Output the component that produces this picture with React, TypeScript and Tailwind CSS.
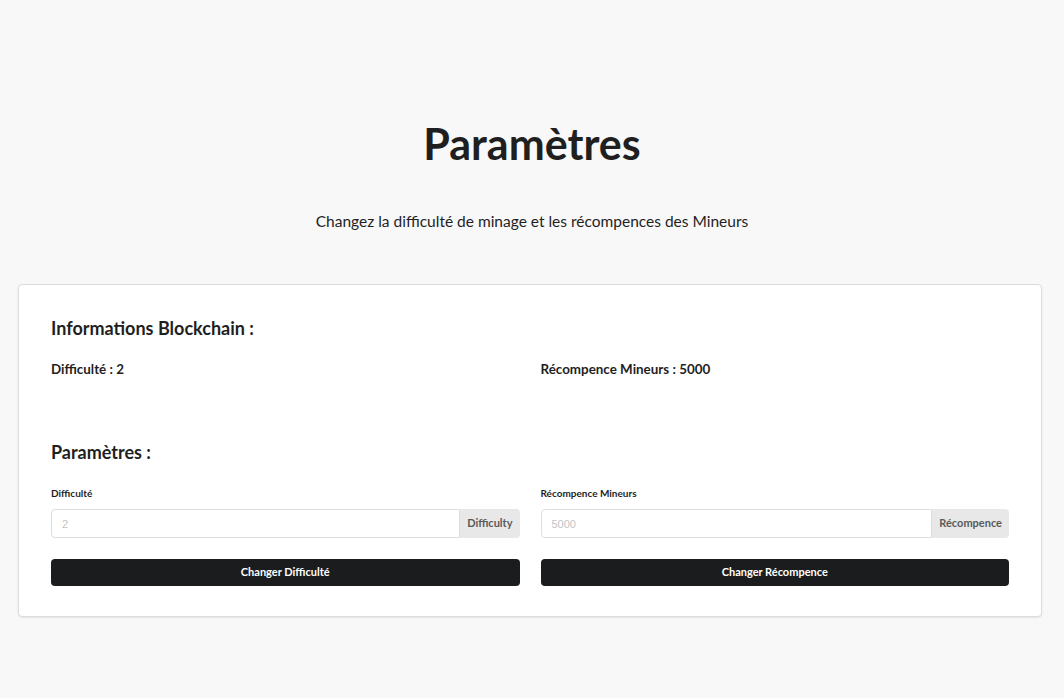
import React from 'react';

function Field({ label, value, addon, action }: { label: string; value: string; addon: string; action: string }) {
  return (
    <div className="flex flex-col">
      <label className="text-[10px] font-bold text-[#1f1f1f] leading-none mb-[11px]">{label}</label>
      <div className="flex h-[29px]">
        <input
          placeholder={value}
          className="flex-1 min-w-0 h-full border border-[#dedede] rounded-l-[4px] px-[10px] text-[11px] bg-white outline-none placeholder:text-[#c4c4c4]"
          style={{ fontFamily: '"Liberation Sans", Arial, sans-serif' }}
        />
        <div className="h-full flex items-center px-[7px] bg-[#e8e8e8] rounded-r-[4px] text-[11px] font-bold text-[#5a5a5a]">
          {addon}
        </div>
      </div>
      <button className="mt-[21px] h-[27px] w-full bg-[#1b1c1d] rounded-[4px] text-white text-[11px] font-bold">
        {action}
      </button>
    </div>
  );
}

export default function App() {
  return (
    <div
      className="min-h-[698px] bg-[#f8f8f8] text-[#1f1f1f] px-[18px] pt-[118px]"
      style={{ fontFamily: 'Lato, "Open Sans", sans-serif' }}
    >
      <h1 className="text-center text-[43px] font-bold leading-[52px]">Paramètres</h1>
      <p className="text-center text-[15.5px] leading-5 mt-[41px]">
        Changez la difficulté de minage et les récompences des Mineurs
      </p>

      <div className="mt-[53px] w-[1024px] bg-white border border-[#dcdcdc] rounded-[4px] shadow-[0_1px_2px_rgba(0,0,0,0.08)] px-[32px] pt-[32px] pb-[30px]">
        <h2 className="text-[18px] font-bold leading-[22px]">Informations Blockchain :</h2>
        <div className="grid grid-cols-2 gap-x-[21px] mt-[22px] text-[13.4px] font-bold leading-4">
          <div>Difficulté : 2</div>
          <div>Récompence Mineurs : 5000</div>
        </div>

        <h2 className="text-[18px] font-bold leading-[22px] mt-[64px]">Paramètres :</h2>
        <div className="grid grid-cols-2 gap-x-[21px] mt-[25px]">
          <Field label="Difficulté" value="2" addon="Difficulty" action="Changer Difficulté" />
          <Field label="Récompence Mineurs" value="5000" addon="Récompence" action="Changer Récompence" />
        </div>
      </div>
    </div>
  );
}
